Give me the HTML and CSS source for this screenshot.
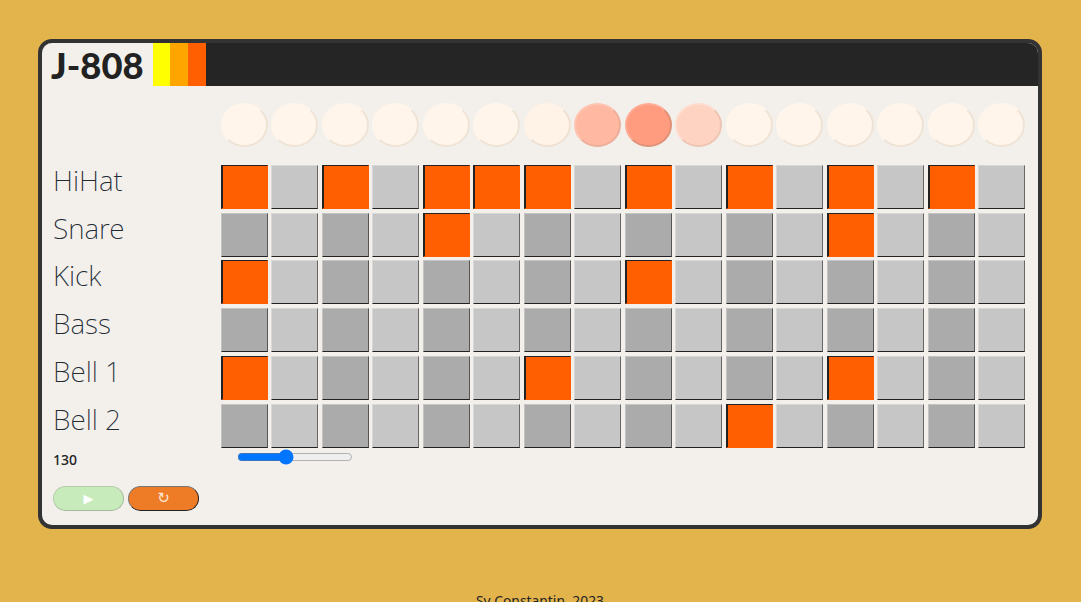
FILE: index.html
```html
<!DOCTYPE html>
<html lang="en">
<head>
<meta charset="utf-8">
<title>J-808</title>
<link rel="stylesheet" href="styles.css">
</head>
<body>
<main class="machine">
  <header class="head">
    <h1 class="title">J-808</h1>
    <span class="stripe s-yellow"></span><span class="stripe s-amber"></span><span class="stripe s-red"></span>
  </header>
  <section class="board">
    <div class="row row-lights">
      <div class="label"></div>
      <div class="cells">
        <span class="light"></span><span class="light"></span><span class="light"></span><span class="light"></span>
        <span class="light"></span><span class="light"></span><span class="light fade1"></span><span class="light fade4"></span>
        <span class="light fade5"></span><span class="light fade3"></span><span class="light"></span><span class="light"></span>
        <span class="light"></span><span class="light"></span><span class="light"></span><span class="light"></span>
      </div>
    </div>
    <div class="row">
      <div class="label">HiHat</div>
      <div class="cells">
        <span class="pad on"></span><span class="pad"></span><span class="pad on"></span><span class="pad"></span>
        <span class="pad on"></span><span class="pad on"></span><span class="pad on"></span><span class="pad"></span>
        <span class="pad on"></span><span class="pad"></span><span class="pad on"></span><span class="pad"></span>
        <span class="pad on"></span><span class="pad"></span><span class="pad on"></span><span class="pad"></span>
      </div>
    </div>
    <div class="row">
      <div class="label">Snare</div>
      <div class="cells">
        <span class="pad dk"></span><span class="pad"></span><span class="pad dk"></span><span class="pad"></span>
        <span class="pad on"></span><span class="pad"></span><span class="pad dk"></span><span class="pad"></span>
        <span class="pad dk"></span><span class="pad"></span><span class="pad dk"></span><span class="pad"></span>
        <span class="pad on"></span><span class="pad"></span><span class="pad dk"></span><span class="pad"></span>
      </div>
    </div>
    <div class="row">
      <div class="label">Kick</div>
      <div class="cells">
        <span class="pad on"></span><span class="pad"></span><span class="pad dk"></span><span class="pad"></span>
        <span class="pad dk"></span><span class="pad"></span><span class="pad dk"></span><span class="pad"></span>
        <span class="pad on"></span><span class="pad"></span><span class="pad dk"></span><span class="pad"></span>
        <span class="pad dk"></span><span class="pad"></span><span class="pad dk"></span><span class="pad"></span>
      </div>
    </div>
    <div class="row">
      <div class="label">Bass</div>
      <div class="cells">
        <span class="pad dk"></span><span class="pad"></span><span class="pad dk"></span><span class="pad"></span>
        <span class="pad dk"></span><span class="pad"></span><span class="pad dk"></span><span class="pad"></span>
        <span class="pad dk"></span><span class="pad"></span><span class="pad dk"></span><span class="pad"></span>
        <span class="pad dk"></span><span class="pad"></span><span class="pad dk"></span><span class="pad"></span>
      </div>
    </div>
    <div class="row">
      <div class="label">Bell 1</div>
      <div class="cells">
        <span class="pad on"></span><span class="pad"></span><span class="pad dk"></span><span class="pad"></span>
        <span class="pad dk"></span><span class="pad"></span><span class="pad on"></span><span class="pad"></span>
        <span class="pad dk"></span><span class="pad"></span><span class="pad dk"></span><span class="pad"></span>
        <span class="pad on"></span><span class="pad"></span><span class="pad dk"></span><span class="pad"></span>
      </div>
    </div>
    <div class="row">
      <div class="label">Bell 2</div>
      <div class="cells">
        <span class="pad dk"></span><span class="pad"></span><span class="pad dk"></span><span class="pad"></span>
        <span class="pad dk"></span><span class="pad"></span><span class="pad dk"></span><span class="pad"></span>
        <span class="pad dk"></span><span class="pad"></span><span class="pad on"></span><span class="pad"></span>
        <span class="pad dk"></span><span class="pad"></span><span class="pad dk"></span><span class="pad"></span>
      </div>
    </div>
  </section>
  <section class="tempo">
    <div class="bpm">130</div>
    <input class="slider" type="range" min="0" max="100" value="41" aria-label="Tempo">
  </section>
  <div class="controls">
    <button class="btn btn-play" type="button">▶</button>
    <button class="btn btn-reset" type="button">↻</button>
  </div>
</main>
<footer class="foot">Sv Constantin, 2023</footer>
</body>
</html>
```
FILE: styles.css
```css
* { box-sizing: border-box; }
html, body { margin: 0; height: 100%; }
body {
  background: #e4b44c;
  display: flex;
  flex-direction: column;
  align-items: flex-start;
  overflow: hidden;
  font-family: "Noto Sans", sans-serif;
  color: #222;
}
.machine {
  margin: 39px 0 0 38px;
  width: 1004px;
  height: 490px;
  background: #f3f0ec;
  border: 4px solid #333;
  border-radius: 14px;
  flex: none;
}
.head {
  display: flex;
  height: 43px;
  background: #252525;
  border-radius: 10px 10px 0 0;
}
.title {
  margin: 0;
  width: 111px;
  padding-left: 9px;
  background: #f3f0ec;
  border-radius: 10px 0 0 0;
  font-family: "Lato", sans-serif;
  font-weight: 900;
  font-size: 36.4px;
  line-height: 44px;
  color: #222;
  white-space: nowrap;
}
.stripe { width: 18px; }
.s-yellow { background: #ffff00; width: 17px; }
.s-amber { background: #ffa500; }
.s-red { background: #ff5f00; }
.board {
  display: flex;
  flex-direction: column;
  gap: 3.8px;
  margin-top: 17px;
  padding-left: 11px;
}
.row { display: flex; align-items: center; height: 44px; }
.row-lights { margin-bottom: 14px; }
.label {
  width: 168px;
  flex: none;
  padding-bottom: 14px;
  font-family: "Noto Sans", sans-serif;
  font-weight: 200;
  font-size: 28px;
  line-height: 30px;
  color: #222a33;
}
.cells {
  width: 804px;
  height: 44px;
  display: grid;
  grid-template-columns: repeat(16, 1fr);
  column-gap: 3.47px;
}
.light {
  border-radius: 50%;
  background: #fff5ea;
  border: 2px solid;
  border-color: #fff5ea #efe3d6 #efe3d6 #fff5ea;
}
.fade1 { background: #fff2e6; border-color: #fff2e6 #efe0d2 #efe0d2 #fff2e6; }
.fade3 { background: #ffd3c1; border-color: #ffdccd #eec5b3 #eec5b3 #ffdccd; }
.fade4 { background: #ffb9a3; border-color: #ffc4b0 #edae99 #edae99 #ffc4b0; }
.fade5 { background: #ff9c80; border-color: #ffab92 #e09178 #e09178 #ffab92; }
.pad {
  background: #c6c6c6;
  border-style: solid;
  border-width: 1px;
  border-color: #d8d8d8 #666 #222 #d8d8d8;
}
.pad.dk { background: #ababab; border-color: #c4c4c4 #555 #222 #c4c4c4; }
.pad.on {
  background: #ff5f00;
  border-width: 1px 1px 1px 2px;
  border-color: #222 #ff5f00 #ff5f00 #222;
}
.tempo {
  display: flex;
  align-items: flex-start;
  height: 38px;
  padding-left: 11px;
}
.bpm {
  width: 184px;
  flex: none;
  font-size: 14px;
  font-weight: 500;
  line-height: 18px;
  margin-top: 3px;
}
.slider {
  width: 116px;
  margin: 1px 0 0;
  flex: none;
  accent-color: #0075ff;
}
.controls {
  display: flex;
  gap: 4px;
  padding-left: 11px;
}
.btn {
  width: 71px;
  height: 25px;
  padding: 0;
  border-radius: 13px;
  border: 1px solid;
  font-size: 13px;
  line-height: 21px;
  color: #fff;
  font-family: "DejaVu Sans", sans-serif;
}
.btn-play {
  background: #c8ebbb;
  border-color: #b5ccaa #a3bb9a #a3bb9a #b5ccaa;
}
.btn-reset {
  background: #ee7b26;
  border-color: #777 #222 #222 #777;
  color: #fde7d6;
  font-size: 15px;
}
.foot {
  margin: 63px 0 0 476px;
  flex: none;
  font-size: 13.85px;
  line-height: 18px;
  color: #222;
}
```
